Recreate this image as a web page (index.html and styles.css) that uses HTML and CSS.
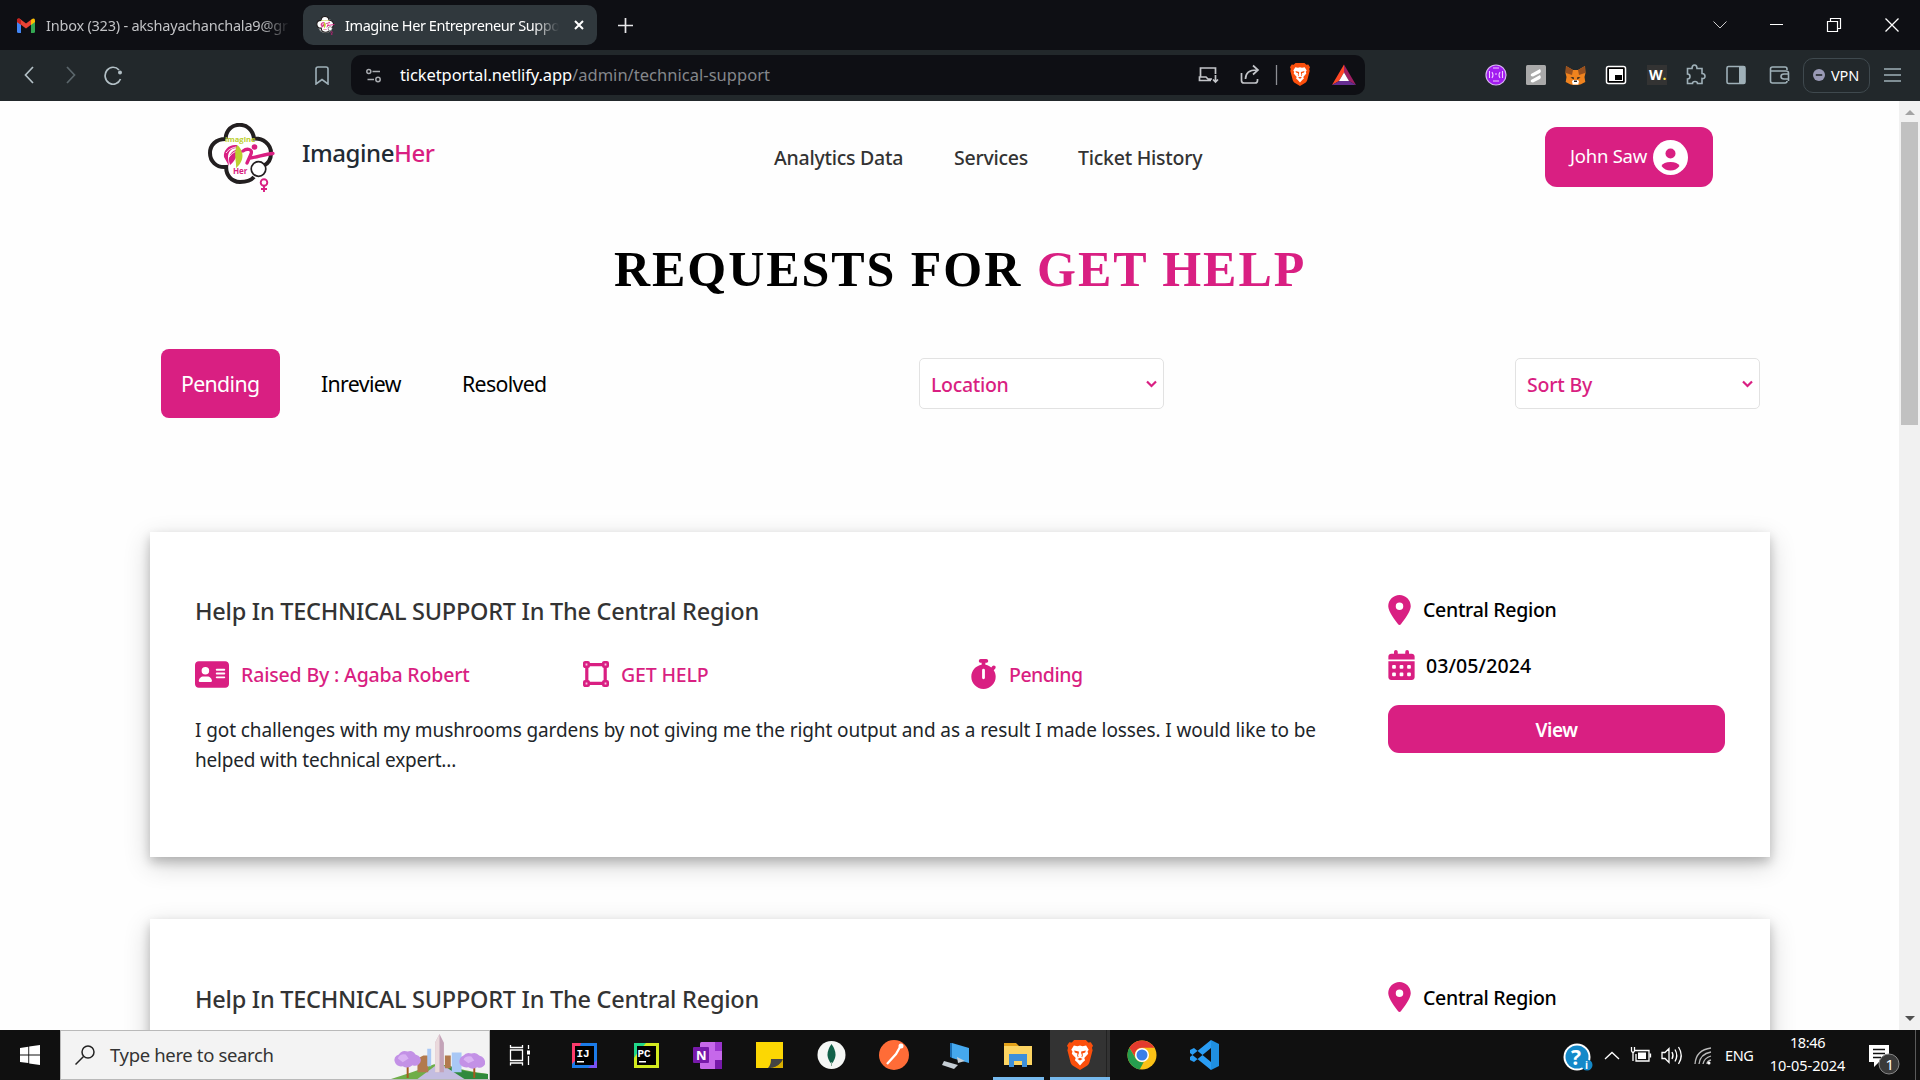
FILE: index.html
```html
<!DOCTYPE html>
<html lang="en">
<head>
<meta charset="utf-8">
<title>Imagine Her Entrepreneur Support</title>
<link rel="stylesheet" href="styles.css">
</head>
<body>
<svg class="defs" aria-hidden="true">
  <symbol id="i-card" viewBox="0 32 576 448"><path fill-rule="evenodd" d="M64 32C28.700 32 0 60.700 0 96V416c0 35.300 28.700 64 64 64H512c35.300 0 64-28.700 64-64V96c0-35.300-28.700-64-64-64H64zM144 288h64c44.200 0 80 35.800 80 80c0 8.800-7.200 16-16 16H80c-8.800 0-16-7.200-16-16c0-44.200 35.800-80 80-80zM112 192a64 64 0 1 1 128 0a64 64 0 1 1-128 0zM368 160H496a16 16 0 0 1 0 32H368a16 16 0 0 1 0-32zM368 224H496a16 16 0 0 1 0 32H368a16 16 0 0 1 0-32zM368 288H496a16 16 0 0 1 0 32H368a16 16 0 0 1 0-32z"/></symbol>
  <symbol id="i-square" viewBox="0 0 26 26"><g fill="none" stroke="currentColor" stroke-width="3.200"><path d="M4 3.600h18M4 22.400h18M3.800 4v18M22.200 4v18"/></g><g fill="#f6c9e0" stroke="currentColor" stroke-width="2.600"><rect x="1.300" y="1.300" width="4.400" height="4.400" rx=".8"/><rect x="20.300" y="1.300" width="4.400" height="4.400" rx=".8"/><rect x="1.300" y="20.300" width="4.400" height="4.400" rx=".8"/><rect x="20.300" y="20.300" width="4.400" height="4.400" rx=".8"/></g></symbol>
  <symbol id="i-watch" viewBox="16 0 416 512"><path fill-rule="evenodd" d="M176 0c-17.700 0-32 14.300-32 32s14.300 32 32 32h16V98.400C92.300 113.800 16 200 16 304c0 114.900 93.100 208 208 208s208-93.100 208-208c0-41.800-12.300-80.700-33.500-113.200l24.100-24.100c12.500-12.500 12.500-32.800 0-45.300s-32.800-12.500-45.300 0L355.700 143c-28.100-23-62.200-38.800-99.700-44.600V64h16c17.700 0 32-14.300 32-32s-14.300-32-32-32H176zM248 192V320a24 24 0 0 1-48 0V192a24 24 0 0 1 48 0z"/></symbol>
  <symbol id="i-pin" viewBox="0 0 384 512"><path fill-rule="evenodd" d="M215.700 499.200C267 435 384 279.400 384 192C384 86 298 0 192 0S0 86 0 192c0 87.400 117 243 168.300 307.200c12.300 15.300 35.100 15.300 47.400 0zM192 128a64 64 0 1 1 0 128a64 64 0 1 1 0-128z"/></symbol>
  <symbol id="i-cal" viewBox="0 0 448 512"><path d="M128 0c17.700 0 32 14.300 32 32V64H288V32a32 32 0 0 1 64 0V64h48c26.500 0 48 21.500 48 48v48H0V112C0 85.500 21.500 64 48 64H96V32c0-17.700 14.300-32 32-32zM0 192H448V464c0 26.500-21.500 48-48 48H48c-26.500 0-48-21.500-48-48z"/><g fill="#fff"><rect x="64" y="256" width="64" height="64" rx="16"/><rect x="192" y="256" width="64" height="64" rx="16"/><rect x="320" y="256" width="64" height="64" rx="16"/><rect x="64" y="384" width="64" height="64" rx="16"/><rect x="192" y="384" width="64" height="64" rx="16"/><rect x="320" y="384" width="64" height="64" rx="16"/></g></symbol>
  <symbol id="i-brave" viewBox="0 0 20 23"><path fill="#fb4f0c" d="M5.500 0h9l1.800 1.800 2-.2L20 4.300l-.8 1.700.5 1.800-2.400 9.200c-.3 1.200-1 2-1.900 2.700L10 23l-5.400-3.300c-.9-.7-1.600-1.500-1.900-2.700L.3 7.800.8 6 0 4.300l1.700-2.700 2 .2z"/><path fill="#fff" d="M10 4.200l2 .5 2.700-.5 2 3.200-.9 1.400.5 1.700-3 3.400.6 1.700-1.700 1.400L10 19.500 7.800 17l-1.700-1.400.6-1.700-3-3.400.5-1.700-.9-1.400 2-3.200 2.700.5z"/><path fill="#fb4f0c" d="M5.500 8l3.600.9v1.300l-.6 1.500.4 1.300-.6.300-.5-1.700.3-1.300L6 9.600zM14.500 8l-3.600.9v1.300l.6 1.500-.4 1.300.6.300.5-1.700-.3-1.300L14 9.600zM8 14.600l2-.9 2 .9-2 1.200z"/></symbol>
  <symbol id="i-logo" viewBox="0 0 67 69"><path fill="#fff" stroke="#231f20" stroke-width="4" d="M17.500 16C18 7 24 1.800 31.500 1.800S45 7 46 15.500C55 15 63 21 63 30c0 6-2 10-7 12.500M46 54c-3 3.500-8 5-14 5C23 58.500 18 52 18.200 44 8 45 2 38 2 30S8 16 17.500 16"/><circle cx="50.500" cy="46" r="7.300" fill="#fff" stroke="#231f20" stroke-width="1.700"/><path fill="#d91f82" d="M29 22c-8-1-14 5-13 12l5 9-1-9c0-5 3-9 9-9zM22 42c5-4 8-10 8-16-7 2-11 7-8 16z"/><path stroke="#fff" stroke-width=".9" fill="none" d="M18 30c3-4 6-5 10-6M21 34c2-3 5-5 8-6"/><path fill="#bccf2f" d="M29 22c6 4 9 15-1 23 1-5-3-14 1-23z"/><circle cx="46.500" cy="24" r="2.800" fill="#d91f82"/><path fill="none" stroke="#d91f82" stroke-width="3.300" stroke-linecap="round" d="M35 28c4-3 10-2 8 3l-4 9M42 35c8-1 15-4 23-4.500"/><text x="17" y="19" class="logo-a">imagine</text><text x="25" y="50.500" class="logo-b">Her</text><g fill="none" stroke="#d91f82" stroke-width="1.900"><circle cx="56" cy="59.500" r="3.300"/><path d="M56 63v6M53 66h6"/></g></symbol>
</svg>

<div class="tabs">
  <svg class="gmail" viewBox="0 0 18 15"><path fill="#4285f4" d="M0 3h4v12H1.500Q0 15 0 13.500z"/><path fill="#34a853" d="M14 3h4v10.500Q18 15 16.500 15H14z"/><path fill="#ea4335" d="M0 2Q0 0 2.500.5L9 5.500 14 1.700v5L9 10.500 4 6.700 0 4z"/><path fill="#fbbc04" d="M14 1.700Q18-1 18 2.500V4l-4 3z"/><path fill="#c5221f" d="M0 2Q0-1 4 1.700v5L0 4z"/></svg>
  <div class="tab-text t-inbox"><span>Inbox (323) - akshayachanchala9@gr</span></div>
  <div class="tab-active">
    <svg class="fav"><use href="#i-logo"/></svg>
    <div class="tab-text t-imagine"><span>Imagine Her Entrepreneur Suppo</span></div>
    <svg class="tab-x" viewBox="0 0 10 10"><path d="M1 1l8 8M9 1L1 9" stroke="#fff" stroke-width="2"/></svg>
  </div>
  <svg class="plus" viewBox="0 0 15 15"><path d="M7.500 0v15M0 7.500h15" stroke="#e8e8ea" stroke-width="1.700"/></svg>
  <svg class="winbtns" viewBox="0 0 186 14" fill="none" stroke="#fff"><path d="M.5 3.500L7 10l6.500-6.500" stroke="#ccc"/><path d="M57 6.500h13M114.500 3.500h10v10h-10zM117.500 3.500v-3h10v10h-3" stroke-width="1.200"/><path d="M172.500.5l13 13M185.500.5l-13 13" stroke-width="1.300"/></svg>
</div>

<div class="toolbar">
  <svg class="nav-ic" viewBox="0 0 98 20" fill="none" stroke="#b3c0c6" stroke-width="1.700"><path d="M9 2L1.500 10 9 18"/><path d="M43 2l7.500 8-7.500 8" stroke="#5b666b"/><path d="M95 5A8 8.500 0 1 0 96.500 14"/><circle cx="96" cy="7.500" r="2" fill="#b3c0c6" stroke="none"/></svg>
  <svg class="bookmark" viewBox="0 0 14 19" fill="none" stroke="#9fb0b8" stroke-width="1.600"><path d="M3 1h8q2 0 2 2v15l-6-4.500L1 18V3q0-2 2-2z"/></svg>
  <div class="url">
    <svg class="site" viewBox="0 0 16 15" fill="none" stroke="#a8abb0" stroke-width="1.500"><circle cx="2.800" cy="3.500" r="2"/><path d="M6.500 3.500H14M1.500 11.500H8"/><circle cx="12" cy="11.500" r="2.200"/></svg>
    <span class="u-host">ticketportal.netlify.app</span><span class="u-path">/admin/technical-support</span>
    <svg class="u-icons" viewBox="0 0 158 24"><g fill="none" stroke="#c3c5c9" stroke-width="1.700"><path d="M13 17.500H1.500v-3.500h1V5h15v6M2 14h6l2 2h4M17.500 12v7M15 16.500l2.500 2.500 2.500-2.500"/><path d="M43.500 10v7.500q0 2.500 2.500 2.500h11q2.500 0 2.500-2.500V16M47.500 16c0-6 4-9 11-9M55 2.500L60 7l-5 4.500"/></g><path d="M78.500 2v20" stroke="#8d8f94" stroke-width="1.300"/><use href="#i-brave" x="92" y="0" width="20" height="23"/><path fill="#ff4724" d="M146 1.500v8L141 18l-7 4z"/><path fill="#9e1f63" d="M146 1.500L158 22l-7-4-5-8.500z"/><path fill="#662d91" d="M134 22l7-4h10l7 4z"/><path fill="#fff" d="M146 9.500l5 8.500h-10z"/></svg>
  </div>
  <svg class="exts" viewBox="0 0 308 24">
    <circle cx="11" cy="12" r="10" fill="#a21bf0" stroke="#d9b3f5" stroke-width="1.200"/><path d="M4.500 8v7M7 9q2 3 0 6M17.500 8v7M15 9q-2 3 0 6M8 5h6M8 18h6M10 11h2" stroke="#f1c9ff" stroke-width="1.100" fill="none"/>
    <rect x="41" y="2" width="20" height="20" rx="1.500" fill="#a9a9a9"/><path fill="#fff" d="M46 11l9-5q2 3-1 4.500L48 13.500q-3 0-2-2.500zM46 17l9-5q2 3-1 4.500L48 19.500q-3 0-2-2.500z"/>
    <path fill="#f0831e" d="M81 3l7 4h5l7-4 .5 7-1 4 .8 5-4.300 2.300-3 .7h-5l-3-.7-4.300-2.300.8-5-1-4z"/><path fill="#97501f" d="M81 3l7 4-1 5-6-2zM100 3l-7 4 1 5 6-2z"/><path fill="#fff" d="M87 18l1.500-1h4l1.500 1-.7 3.500h-5.600z"/><path fill="#222" d="M85.500 14.500l3-.5.500 2.500zM95.500 14.500l-3-.5-.5 2.500zM89 17.500h3v1.500h-3z"/>
    <rect x="121.500" y="3.500" width="19" height="17" rx="2" fill="#000" stroke="#fff" stroke-width="1.500"/><path fill="#fff" d="M124 6h14v12h-14z"/><path d="M130 12h7v5h-7z"/>
    <rect x="162" y="2" width="20" height="20" fill="#333"/><text x="164" y="16.500" class="w-text">W<tspan fill="#f5e04a">.</tspan></text>
    <g fill="none" stroke="#9fb0b8" stroke-width="1.600"><path d="M202.500 5.500H207q0-3.500 2.500-3.500t2.500 3.500h5v5q3 0 3 2.700t-3 2.300v5h-4.500q0-2-2.500-2t-2.500 2h-5v-4.500q2.500 0 2.500-2.500t-2.500-2.500z"/><rect x="242" y="3.500" width="18" height="17" rx="1.500"/><path d="M257 3.500v17" stroke-width="6"/><path d="M302 7V6q0-2-2-2h-12.500q-2 0-2 2v12q0 2 2 2H300q2 0 2-2M286 8h15q2.500 0 2.500 2v8M303.500 11H299q-3 0-3 2.500t3 2.500h4.500z"/></g>
  </svg>
  <div class="vpn"><svg viewBox="0 0 12 12"><circle cx="6" cy="6" r="6" fill="#9a9ab5"/><path d="M2.800 6h6.400" stroke="#23282b" stroke-width="1.600"/></svg><span>VPN</span></div>
  <svg class="menu" viewBox="0 0 17 14"><path d="M0 1h17M0 7h17M0 13h17" stroke="#9fb0b8" stroke-width="1.500"/></svg>
</div>

<div class="view">
  <main class="page">
    <header class="nav">
      <svg class="logo"><use href="#i-logo"/></svg>
      <div class="brand"><span>Imagine<b>Her</b></span></div>
      <nav><a class="n1">Analytics Data</a><a class="n2">Services</a><a class="n3">Ticket History</a></nav>
      <button class="user"><span>John Saw</span><svg viewBox="0 0 35 35"><circle cx="17.500" cy="17.500" r="17.500" fill="#fff"/><circle cx="17.500" cy="13.500" r="5" fill="#d91f82"/><path fill="#d91f82" d="M8.500 26q2-4 9-4t9 4q-3.500 4.500-9 4.500T8.500 26z"/></svg></button>
    </header>
    <h1><span class="h-a">REQUESTS FOR</span> <span class="h-b">GET HELP</span></h1>
    <div class="filters">
      <button class="f on"><span class="fp">Pending</span></button><button class="f f2"><span class="fi">Inreview</span></button><button class="f f3"><span class="fr">Resolved</span></button>
      <div class="select loc"><span class="sl">Location</span><svg viewBox="0 0 11 8"><path d="M1 1.500l4.500 4.500L10 1.500"/></svg></div>
      <div class="select"><span class="ss">Sort By</span><svg viewBox="0 0 11 8"><path d="M1 1.500l4.500 4.500L10 1.500"/></svg></div>
    </div>
    <section class="card">
      <div class="info">
        <h2><span class="ct">Help In TECHNICAL SUPPORT In The Central Region</span></h2>
        <div class="meta">
          <div><svg class="ic ic-card"><use href="#i-card"/></svg><span class="m1">Raised By : Agaba Robert</span></div>
          <div><svg class="ic ic-sq"><use href="#i-square"/></svg><span class="m2">GET HELP</span></div>
          <div><svg class="ic ic-watch"><use href="#i-watch"/></svg><span class="m3">Pending</span></div>
        </div>
        <p><span class="d1">I got challenges with my mushrooms gardens by not giving me the right output and as a result I made losses. I would like to be</span><br><span class="d2">helped with technical expert...</span></p>
      </div>
      <aside>
        <div class="row"><svg class="ic ic-pin"><use href="#i-pin"/></svg><span class="r1">Central Region</span></div>
        <div class="row date"><svg class="ic ic-cal"><use href="#i-cal"/></svg><span class="r2">03/05/2024</span></div>
        <button class="viewbtn"><span class="vb">View</span></button>
      </aside>
    </section>
    <section class="card">
      <div class="info">
        <h2><span class="ct">Help In TECHNICAL SUPPORT In The Central Region</span></h2>
      </div>
      <aside>
        <div class="row"><svg class="ic ic-pin"><use href="#i-pin"/></svg><span class="r1">Central Region</span></div>
      </aside>
    </section>
  </main>
  <div class="scroll"><svg viewBox="0 0 10 5"><path d="M0 5l5-5 5 5z" fill="#a3a3a3"/></svg><div class="thumb"></div><svg class="down" viewBox="0 0 10 5"><path d="M0 0l5 5 5-5z" fill="#505050"/></svg></div>
</div>

<footer class="taskbar">
  <div class="start"><svg viewBox="0 0 20 20" fill="#fff"><path d="M0 3l8.300-1.200v7.700H0zM9.200 1.600L20 0v9.500H9.200zM0 10.400h8.300v7.700L0 17zM9.200 10.400H20V20L9.200 18.400z"/></svg></div>
  <div class="search">
    <svg class="mag" viewBox="0 0 20 20" fill="none" stroke="#222" stroke-width="1.500"><circle cx="13" cy="7" r="6"/><path d="M8.500 11.500L.5 19.500"/></svg>
    <span class="st">Type here to search</span>
    <svg class="city" viewBox="0 0 99 49"><path fill="#6fae48" d="M0 49Q20 43 44 34l14 1Q75 41 99 44v5z"/><path fill="#2f8a3c" d="M55 34Q72 42 99 44v5H68z"/><path fill="#c3bde0" d="M46 35h7l22 14H27z"/><path fill="#b27a4d" d="M27 28l6-3h5v17H27zM55 25h6v13h-6z"/><path fill="#a9c8f5" d="M37 18h4v18h-4zM62 22h10v20H62z"/><path fill="#c3a3b8" d="M45 12l4.500-9 4.500 9v30h-9z"/><path fill="#ead9dc" d="M45 12l4.500-9v39H45z"/><path stroke="#a55a1e" stroke-width="2" d="M17 35v13M85 35v13"/><path fill="#c391e6" d="M4 32q-2-6 4-8 3-5 9-3 5-2 8 3 7 2 5 8-3 5-8 3-5 4-10 1-6 1-8-4zM70 33q-1-6 4-8 3-4 8-2 5-2 8 2 7 2 6 9-3 5-8 3-5 3-9 0-7 1-9-4z"/><path fill="#d9b2f3" d="M7 28q2-5 8-4l3 4-6 4zM74 29q2-4 8-3l3 4-6 3z"/></svg>
  </div>
  <svg class="apps" viewBox="0 0 740 50">
    <g fill="none" stroke="#fff" stroke-width="1.300"><path d="M20.500 20h12v10.500h-12zM20.500 15v2.500h12V15M20.500 35.500V33h12v2.500M38.500 15v4M38.500 26v9"/><path d="M38.500 20.500v4" stroke-width="3"/></g>
    <rect x="82" y="13" width="25" height="25" fill="#1b7be8"/><path fill="#fb3b6c" d="M82 13h9l-6 18-3 3z"/><path fill="#7a52f4" d="M98 38l9-8v8z"/><rect x="85" y="16" width="19" height="19" fill="#000"/><text x="86.500" y="26.500" class="ide">IJ</text><path fill="#fff" d="M87 31h7v1.500h-7z"/>
    <rect x="144" y="13" width="25" height="25" fill="#d2ea1f"/><path fill="#21d789" d="M144 13h12l-8 9-4 6z"/><rect x="147" y="16" width="19" height="19" fill="#000"/><text x="147.500" y="26.500" class="ide">PC</text><path fill="#fff" d="M149 31h7v1.500h-7z"/>
    <rect x="210" y="12" width="22" height="27" rx="1.500" fill="#c668ea"/><path fill="#9a35cc" d="M225 12h7v9h-7z"/><path fill="#7719aa" d="M225 30h7v9h-7z"/><rect x="203" y="17" width="16" height="16" rx="1" fill="#7719aa"/><text x="206" y="29.500" class="one">N</text>
    <path fill="#fcd703" d="M266 12h27v17l-12 9h-15z"/><path fill="#444" d="M278 38q3-3 3-9h12q-3 7-12 9z"/><path fill="#d9ae00" d="M281 38q9-2 12-9v9z"/>
    <circle cx="341.500" cy="25" r="14" fill="#f5f7f5"/><path fill="#116149" d="M341.500 14q8 11 0 20-8-9 0-20z"/><path stroke="#8a9" d="M341.500 32v4"/>
    <circle cx="404" cy="25" r="15" fill="#ff6c37"/><path d="M397 34l9-10 4-7" stroke="#fff" stroke-width="2.300" fill="none"/><circle cx="411" cy="16" r="2.500" fill="#fff"/>
    <path fill="#45a8ee" d="M462 13l17 5v15l-17-5z"/><path fill="#1a6db3" d="M460 13l2 0v15l-2-1z"/><path fill="#c6ced5" d="M454 31l14 4-4 4-12-4zM467 27l8 4-7 2z"/>
    <path fill="#e3a21a" d="M514 13h12l3 3v8h-15z"/><path fill="#fcd462" d="M514 16h28v19h-28z"/><path fill="#3d8fdb" d="M519 24h18v13h-5v-6h-8v6h-5z"/>
    <path fill="#76b9ed" d="M503 47h51v3h-51z"/>
    <path fill="#333" d="M560 0h60v47h-60z"/><path fill="#76b9ed" d="M560 47h60v3h-60z"/><path fill="#222" d="M616 0h1v47h-1z"/>
    <use href="#i-brave" x="577" y="10" width="26" height="30"/>
    <circle cx="652" cy="25" r="14.500" fill="#fbc116"/><path fill="#e33b2e" d="M639.400 17.800A14.500 14.500 0 0 1 664.500 17.700H652a7 7 0 0 0-6.500 10z"/><path fill="#269e4f" d="M639.400 17.800l6.300 10.800q3 4.500 8 3.300l-4 7.500a14.500 14.500 0 0 1-10.300-21.600z"/><circle cx="652" cy="25" r="7" fill="#fff"/><circle cx="652" cy="25" r="5.500" fill="#3a7ee8"/>
    <path fill="#1f8fe0" d="M721 10l8 4v22l-8 4z"/><path fill="#2a9df4" d="M721 10v8l-17 14-4-2v-3zM721 40v-8l-17-14-4 2v3z"/>
  </svg>
  <svg class="tray" viewBox="0 0 160 50">
    <circle cx="18" cy="27" r="13.500" fill="#fff"/><circle cx="18" cy="27" r="11.500" fill="#1489c9"/><text x="12" y="34.500" class="help">?</text><circle cx="28" cy="35" r="5.500" fill="#1489c9"/><text x="26" y="39" class="hi">i</text>
    <g fill="none" stroke="#fff" stroke-width="1.300"><path d="M46 29l7-6.500L60 29M76 20.500h14v10.500H77v-7M91.500 23.500v4M72.500 17v4q1.500 3 3 0v-4M74 23v8"/><path d="M103 22.500h3l4-4v14l-4-4h-3zM113 22q2 3.500 0 7M116 19.500q3.500 6 0 12M119.500 17q5.500 8.500 0 17"/></g><path fill="#fff" d="M79 22.500h8v6.500h-8z"/><g fill="none" stroke="#bbb" stroke-width="1.300"><path d="M136 34q1-14 16-16M140 34q1-10 12-12M144 34q1-6 8-8M148 34q0-3 4-4"/></g><circle cx="150" cy="33" r="1.500" fill="#fff"/>
  </svg>
  <span class="eng">ENG</span>
  <div class="clock"><span class="c1">18:46</span><span class="c2">10-05-2024</span></div>
  <svg class="notif" viewBox="0 0 36 36"><path fill="#fff" d="M0 0h20v17H10l-5 5v-5H0z"/><path stroke="#111" stroke-width="1.500" d="M4 4.500h12M4 8.500h12M4 12.500h8"/><circle cx="20" cy="19" r="10" fill="#3a3a3a" stroke="#888"/><text x="16.500" y="24.500" class="nn">1</text></svg>
  <div class="peek"></div>
</footer>
</body>
</html>
```
FILE: styles.css
```css
* { box-sizing: border-box; }
body { margin: 0; width: 1920px; height: 1080px; overflow: hidden; display: flex; flex-direction: column; font-family: "Noto Sans", "Open Sans", sans-serif; background: #fff; color: #212529; }
svg { display: block; flex: none; }
.ic { fill: currentColor; }
.defs { position: absolute; width: 0; height: 0; }
button { font: inherit; border: 0; padding: 0; color: inherit; background: none; }
span, a { white-space: nowrap; }

.tabs { height: 50px; flex: none; background: #0e0f14; display: flex; align-items: center; color: #c1c2c5; font-size: 14.500px; }
.gmail { width: 18px; height: 15px; margin-left: 17px; }
.tab-text { -webkit-mask-image: linear-gradient(to right, #000 88%, transparent); mask-image: linear-gradient(to right, #000 88%, transparent); margin-top: -1px; }
.t-inbox { width: 244px; margin-left: 11px; letter-spacing: -.22px; }
.t-imagine { width: 214px; margin-left: 10px; color: #fff; letter-spacing: -.42px; }
.tab-active { width: 294px; height: 40px; margin-left: 13px; border-radius: 10px; background: #30383d; display: flex; align-items: center; padding-left: 13px; }
.fav { width: 19px; height: 19px; background: radial-gradient(#fff 45%, transparent 60%); }
.tab-x { width: 10px; height: 10px; margin-left: 15px; }
.plus { width: 15px; height: 15px; margin-left: 21px; }
.winbtns { width: 186px; height: 14px; margin-left: auto; margin-right: 21px; }

.toolbar { height: 51px; flex: none; background: #22282b; display: flex; align-items: center; padding-bottom: 1px; }
.nav-ic { width: 98px; height: 20px; margin-left: 24px; }
.bookmark { width: 14px; height: 19px; margin-left: 193px; }
.url { width: 1014px; height: 40px; margin-left: 22px; border-radius: 10px; background: #0e0f14; display: flex; align-items: center; font-size: 16.500px; }
.site { width: 16px; height: 15px; margin-left: 15px; }
.u-host { color: #fff; width: 172px; margin-left: 18px; letter-spacing: -.1px; }
.u-path { color: #85878b; letter-spacing: .03px; }
.url span { padding-bottom: 1px; }
.u-icons { width: 158px; height: 24px; margin-left: auto; margin-right: 9px; }
.exts { width: 308px; height: 24px; margin-left: 120px; }
.w-text { font: bold 14px "Open Sans", sans-serif; fill: #fff; }
.vpn { width: 67px; height: 35px; margin-left: 10px; border: 1px solid #3f494e; border-radius: 10px; display: flex; align-items: center; padding-left: 9px; color: #fff; font-size: 14.500px; letter-spacing: -.15px; }
.vpn svg { width: 12px; height: 12px; margin-right: 6px; }
.menu { width: 17px; height: 14px; margin-left: 14px; }

.view { height: 929px; flex: none; display: flex; }
.page { width: 1899px; height: 929px; overflow: hidden; background: #fefefe; }
.scroll { width: 21px; background: #f1f1f1; display: flex; flex-direction: column; align-items: center; padding-top: 9px; }
.scroll svg { width: 10px; height: 5px; }
.thumb { width: 17px; height: 303px; margin-top: 7px; background: #c1c1c1; }
.scroll .down { margin-top: auto; margin-bottom: 9px; }

.nav { height: 101px; display: flex; padding-left: 208px; }
.logo { width: 67px; height: 69px; margin-top: 22px; }
.logo-a { font: bold 7.600px "Open Sans", sans-serif; fill: #bccf2f; }
.logo-b { font: bold 8px "Open Sans", sans-serif; fill: #d91f82; }
.brand { width: 472px; margin-left: 27px; font-size: 24px; line-height: 34px; padding-top: 35px; font-weight: 500; color: #212a33; letter-spacing: -.45px; }
.brand b { color: #d91f82; font-weight: 500; }
.nav nav { width: 771px; display: flex; font-size: 19.500px; line-height: 28px; padding-top: 43px; color: #333; font-weight: 500; letter-spacing: -.25px; }
.n1 { width: 180px; } .n2 { width: 124px; }
.user { width: 168px; height: 60px; margin-top: 26px; border-radius: 12px; background: #d91f82; color: #fff; display: flex; align-items: center; padding-left: 25px; font-size: 18.500px; letter-spacing: -.25px; }
.user span { width: 83px; text-align: left; padding-bottom: 3px; }
.user svg { width: 35px; height: 35px; }

h1 { margin: 37px 0 0; padding-left: 614px; height: 60px; font: bold 50px/60px "Liberation Serif", serif; color: #000; display: flex; }
.h-a { width: 423px; letter-spacing: 1.950px; }
.h-b { color: #d91f82; letter-spacing: 2px; }

.filters { margin: 50px 0 0 161px; height: 69px; width: 1599px; display: flex; align-items: center; font-size: 21.500px; color: #000; }
.f { height: 69px; text-align: left; padding-bottom: 1px; letter-spacing: -.65px; font-size: 21.300px; }
.on { width: 119px; padding-left: 20px; border-radius: 8px; background: #d91f82; color: #fff; }
.f2 { width: 141px; padding-left: 41px; }
.f3 { width: 200px; padding-left: 41px; }
.select { width: 245px; height: 51px; border: 1px solid #e2e2e2; border-radius: 5px; margin-left: auto; background: #fff; display: flex; align-items: center; justify-content: space-between; padding: 1px 6px 0 11px; color: #d91f82; font-size: 19.500px; font-weight: 500; letter-spacing: -.2px; }
.select.loc { margin-left: 298px; }
.select svg { width: 11px; height: 8px; fill: none; stroke: #d91f82; stroke-width: 2.200; margin-top: -1px; }
.sl { letter-spacing: -.3px; }

.card { width: 1620px; height: 325px; margin: 114px 0 0 150px; background: #fff; box-shadow: 0 5px 10px rgba(0,0,0,.2), 0 7.500px 25px rgba(0,0,0,.19); padding: 63px 45px 0; display: flex; }
.card + .card { margin-top: 62px; position: relative; }
.info { width: 1193px; margin-top: -1px; }
h2 { margin: 0; font-size: 23.500px; font-weight: 500; line-height: 34px; color: #333; letter-spacing: -.25px; }
.card + .card h2 { margin-top: 1px; }
.meta { display: grid; grid-template-columns: 388px 388px 1fr; margin-top: 30px; height: 32px; color: #d91f82; font-size: 19.500px; font-weight: 500; letter-spacing: -.17px; }
.meta div { display: flex; align-items: center; }
.meta span { padding-top: 1px; }
.ic-card { width: 34px; height: 27px; margin-right: 12px; }
.ic-sq { width: 26px; height: 26px; margin-right: 12px; }
.ic-watch { width: 25px; height: 30px; margin-right: 13px; }
.m3 { letter-spacing: -.5px; }
p { margin: 25px 0 0; font-size: 19px; line-height: 30px; letter-spacing: -.1px; }
.d2 { letter-spacing: -.2px; }
aside { width: 337px; color: #000; font-size: 19.500px; font-weight: 500; letter-spacing: -.3px; }
.row { display: flex; align-items: center; height: 30px; }
.row span { padding-bottom: 1px; }
.row svg { color: #d91f82; }
.ic-pin { width: 23px; height: 30px; margin-right: 12px; }
.ic-cal { width: 27px; height: 30px; margin-right: 11px; }
.row .r2 { letter-spacing: .1px; padding-bottom: 0; padding-top: 1px; }
.card + .card .r1 { padding-bottom: 0; padding-top: 1px; }
.date { margin-top: 25px; }
.viewbtn { width: 337px; height: 48px; margin-top: 25px; padding-top: 2px; border-radius: 11px; background: #d91f82; color: #fff; font-weight: 600; font-size: 19px; letter-spacing: -.5px; }

.taskbar { height: 50px; flex: none; background: #101010; display: flex; color: #fff; }
.start { width: 60px; padding: 15px 0 0 20px; }
.start svg { width: 20px; height: 20px; }
.search { width: 430px; background: #f3f3f3; border: 1px solid #b9b9b9; display: flex; align-items: center; color: #333; font-size: 18.500px; letter-spacing: -.35px; padding-left: 14px; }
.st { padding-bottom: 2px; }
.mag { width: 20px; height: 20px; margin-right: 15px; }
.city { width: 99px; height: 48px; margin-left: auto; }
.apps { width: 740px; height: 50px; }
.ide { font: bold 11px "Liberation Mono", monospace; fill: #fff; }
.one { font: bold 13px "Open Sans", sans-serif; fill: #fff; }
.tray { width: 160px; height: 50px; margin-left: 329px; }
.help { font: bold 21px "Open Sans", sans-serif; fill: #fff; }
.hi { font: bold 10px "Open Sans", sans-serif; fill: #fff; }
.eng { width: 40px; margin-left: 6px; font-size: 14.500px; line-height: 50px; letter-spacing: -.4px; }
.clock { width: 85px; display: flex; flex-direction: column; align-items: center; font-size: 14.500px; line-height: 23px; padding-top: 1px; }
.c1 { letter-spacing: -.4px; }
.notif { width: 36px; height: 36px; margin: 15px 0 0 19px; }
.nn { font: 15px "Noto Sans", sans-serif; fill: #fff; }
.peek { width: 1px; margin-left: 10px; background: #5a5a5a; }
```
